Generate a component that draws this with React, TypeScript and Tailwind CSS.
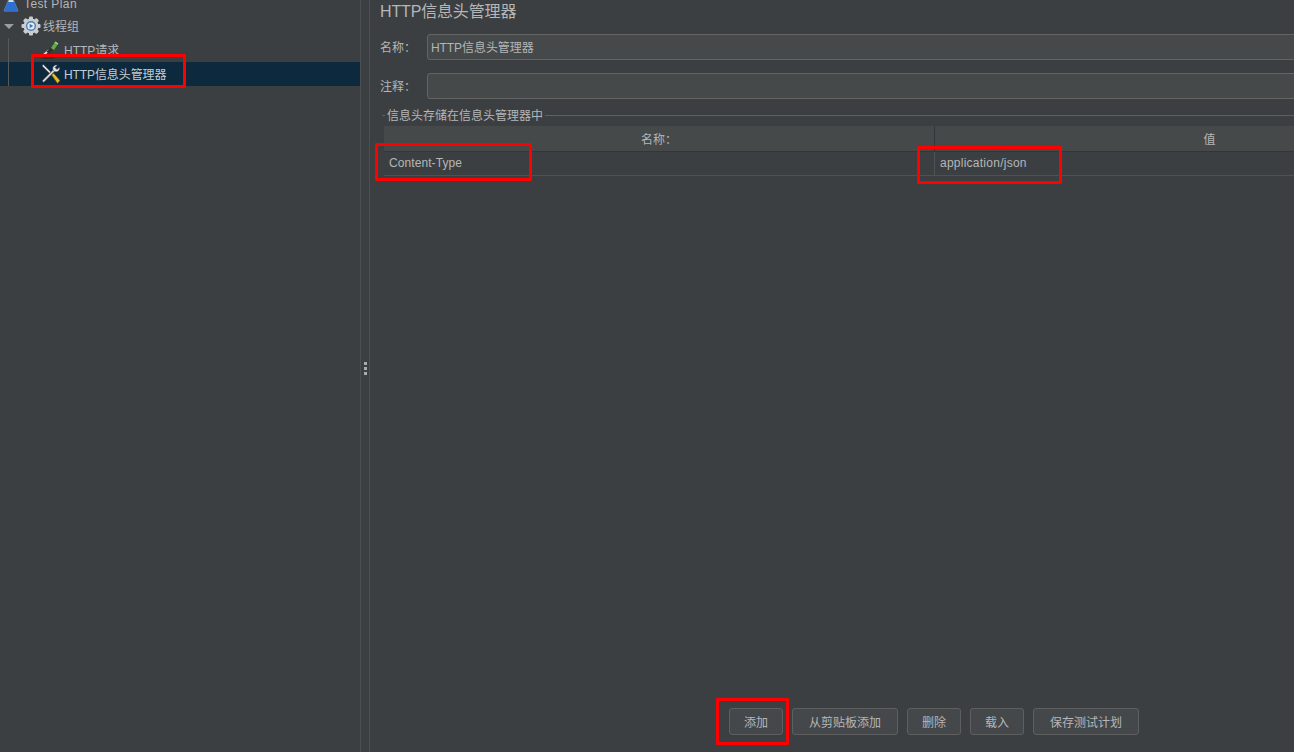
const font = "font-['Liberation_Sans','Noto_Sans_CJK_SC',sans-serif]"

function FlaskIcon() {
  return (
    <svg width="16" height="18" viewBox="0 0 16 18" className="shrink-0">
      <path d="M6 0h4v5l5 12H1L6 5z" fill="#d5dbe2" stroke="#7f8791" strokeWidth="1" />
      <path d="M4.500 8h7l3.500 9H1z" fill="#2f6fd0" />
    </svg>
  )
}

function GearIcon() {
  return (
    <svg width="20" height="20" viewBox="0 0 20 20" className="shrink-0">
      <g fill="#c9ccd0">
        <circle cx="10" cy="10" r="7.5" />
        <rect x="8" y="0.5" width="4" height="19" rx="1" />
        <rect x="8" y="0.5" width="4" height="19" rx="1" transform="rotate(45 10 10)" />
        <rect x="8" y="0.5" width="4" height="19" rx="1" transform="rotate(90 10 10)" />
        <rect x="8" y="0.5" width="4" height="19" rx="1" transform="rotate(135 10 10)" />
      </g>
      <circle cx="10" cy="10" r="5" fill="#4f7fb5" />
      <circle cx="10" cy="10" r="3.6" fill="#e4ecf5" />
      <path d="M8.600 7.800l3.600 2.200-3.600 2.200z" fill="#3f76b8" />
    </svg>
  )
}

function DropperIcon() {
  return (
    <svg width="20" height="20" viewBox="0 0 20 20" className="shrink-0">
      <ellipse cx="8" cy="18" rx="7" ry="1" fill="#2f3234" />
      <path d="M2 16.500L9 10" stroke="#d6d8da" strokeWidth="1.800" />
      <path d="M6.500 11.500l4-4 2.500 2.500-4 4z" fill="#2e3032" />
      <path d="M11 8l4-6 3 2-4 6z" fill="#5fae45" />
      <path d="M15 2l3 2" stroke="#a3dc8a" strokeWidth="1.500" />
    </svg>
  )
}

function ToolsIcon() {
  return (
    <svg width="20" height="20" viewBox="0 0 20 20" className="shrink-0">
      <path d="M1.500 1L2.500.5 11 9l-1.500 1.500L1 2z" fill="#d9dbdd" stroke="#3b3f42" strokeWidth="0.600" />
      <path d="M10.500 11L12.500 9l6.500 7.500-2.500 3z" fill="#e9bb1f" stroke="#4d4214" strokeWidth="0.600" />
      <path d="M2 17.500L13 6.500" stroke="#2b2e30" strokeWidth="3" />
      <path d="M2 17.500L13 6.500" stroke="#d3d5d7" strokeWidth="1.800" />
      <path d="M12 6c-1-3 1-5.500 4.500-5l-2.500 2.500 2 2L18.500 3c.7 3.500-2 5.500-5 4.500z" fill="#e3e5e7" stroke="#3f4347" strokeWidth="0.500" />
    </svg>
  )
}

function RedBox({ className }: { className: string }) {
  return <div className={`absolute border-[3px] border-[#ff0000] rounded-[1px] pointer-events-none ${className}`} />
}

const buttons = [
  { label: '添加', w: 'w-[54px]' },
  { label: '从剪贴板添加', w: 'w-[106px]' },
  { label: '删除', w: 'w-[54px]' },
  { label: '载入', w: 'w-[54px]' },
  { label: '保存测试计划', w: 'w-[106px]' },
]

export default function App() {
  return (
    <div className={`relative flex w-[1294px] h-[752px] overflow-hidden bg-[#3c3f41] text-[#b4b6b8] text-[12px] ${font}`}>
      {/* tree */}
      <div className="relative w-[360px] shrink-0 h-full">
        <div className="flex flex-col -mt-[10px]">
          <div className="flex items-center h-6 pl-[3px] pt-[1px] gap-[5px]">
            <FlaskIcon />
            <span className="pt-[2px] tracking-[0.4px]">Test Plan</span>
          </div>
          <div className="flex items-center h-6 pl-[4px]">
            <div className="w-0 h-0 border-l-[5px] border-r-[5px] border-t-[5px] border-l-transparent border-r-transparent border-t-[#9a9da0] mr-[7px]" />
            <GearIcon />
            <span className="ml-[2px] pt-[2px]">线程组</span>
          </div>
          <div className="flex items-center h-6 pl-[40px] gap-[4px]">
            <DropperIcon />
            <span className="pt-[2px]">HTTP请求</span>
          </div>
          <div className="flex items-center h-6 pl-[41px] gap-[3px] bg-[#0d293e] text-[#c3ccd4]">
            <ToolsIcon />
            <span className="pt-[2px] tracking-[-0.1px]">HTTP信息头管理器</span>
          </div>
        </div>
        <div className="absolute left-[8px] top-[38px] h-[48px] w-px bg-[#57595b]" />
      </div>

      {/* splitter */}
      <div className="w-[10px] shrink-0 h-full border-x border-[#4c4f51] flex flex-col items-center justify-center gap-[2px] pb-[16px]">
        {[0, 1, 2].map((i) => (
          <div key={i} className="w-[3px] h-[3px] bg-[#a9abad]" />
        ))}
      </div>

      {/* header manager panel */}
      <div className="w-[1128px] shrink-0 h-full flex flex-col pl-[10px]">
        <div className="h-[22px] text-[16px] leading-[22px] pt-[1px] tracking-[-0.15px]">HTTP信息头管理器</div>
        <div className="flex items-center h-[26px] mt-[12px]">
          <span className="w-[47px] shrink-0 pt-[2px]">名称：</span>
          <div className="flex-1 h-full rounded-[3px] border border-[#646464] bg-[#45494a] flex items-center pl-[3px] pt-[2px] tracking-[-0.07px]">
            HTTP信息头管理器
          </div>
        </div>
        <div className="flex items-center h-[26px] mt-[13px]">
          <span className="w-[47px] shrink-0 pt-[2px]">注释：</span>
          <div className="flex-1 h-full rounded-[3px] border border-[#646464] bg-[#45494a]" />
        </div>

        <div className="flex items-center h-[16px] mt-[8px] ml-[2px]">
          <div className="w-[3px] h-px bg-[#5e6060]" />
          <span className="px-[2px] pt-[2px]">信息头存储在信息头管理器中</span>
          <div className="flex-1 h-px bg-[#5e6060]" />
        </div>

        <div className="ml-[4px] mr-[14px] mt-[3px]">
          <div className="grid grid-cols-[550px_1fr] h-[26px] bg-[#45494a] border-b border-[#333638]">
            <div className="flex items-center justify-center pt-[2px]">名称：</div>
            <div className="flex items-center justify-center border-l border-[#333638] pt-[2px]">值</div>
          </div>
          <div className="grid grid-cols-[550px_1fr] h-[24px] border-b border-[#4e5254]">
            <div className="flex items-center pl-[5px] pb-[2px] tracking-[0.08px]">Content-Type</div>
            <div className="flex items-center pl-[5px] pb-[2px] border-l border-[#4e5254] tracking-[0.25px]">application/json</div>
          </div>
        </div>

        <div className="mt-auto mb-[17px] -ml-[10px] flex justify-center gap-[9px]">
          {buttons.map((b) => (
            <div
              key={b.label}
              className={`${b.w} h-[27px] flex items-center justify-center rounded-[3px] border border-[#5e6060] bg-[#44484a] pt-[2px]`}
            >
              {b.label}
            </div>
          ))}
        </div>
      </div>

      <RedBox className="left-[31px] top-[54px] w-[155px] h-[34px]" />
      <RedBox className="left-[375px] top-[143px] w-[157px] h-[38px]" />
      <RedBox className="left-[917px] top-[146px] w-[145px] h-[38px]" />
      <RedBox className="left-[716px] top-[698px] w-[73px] h-[47px]" />
    </div>
  )
}
